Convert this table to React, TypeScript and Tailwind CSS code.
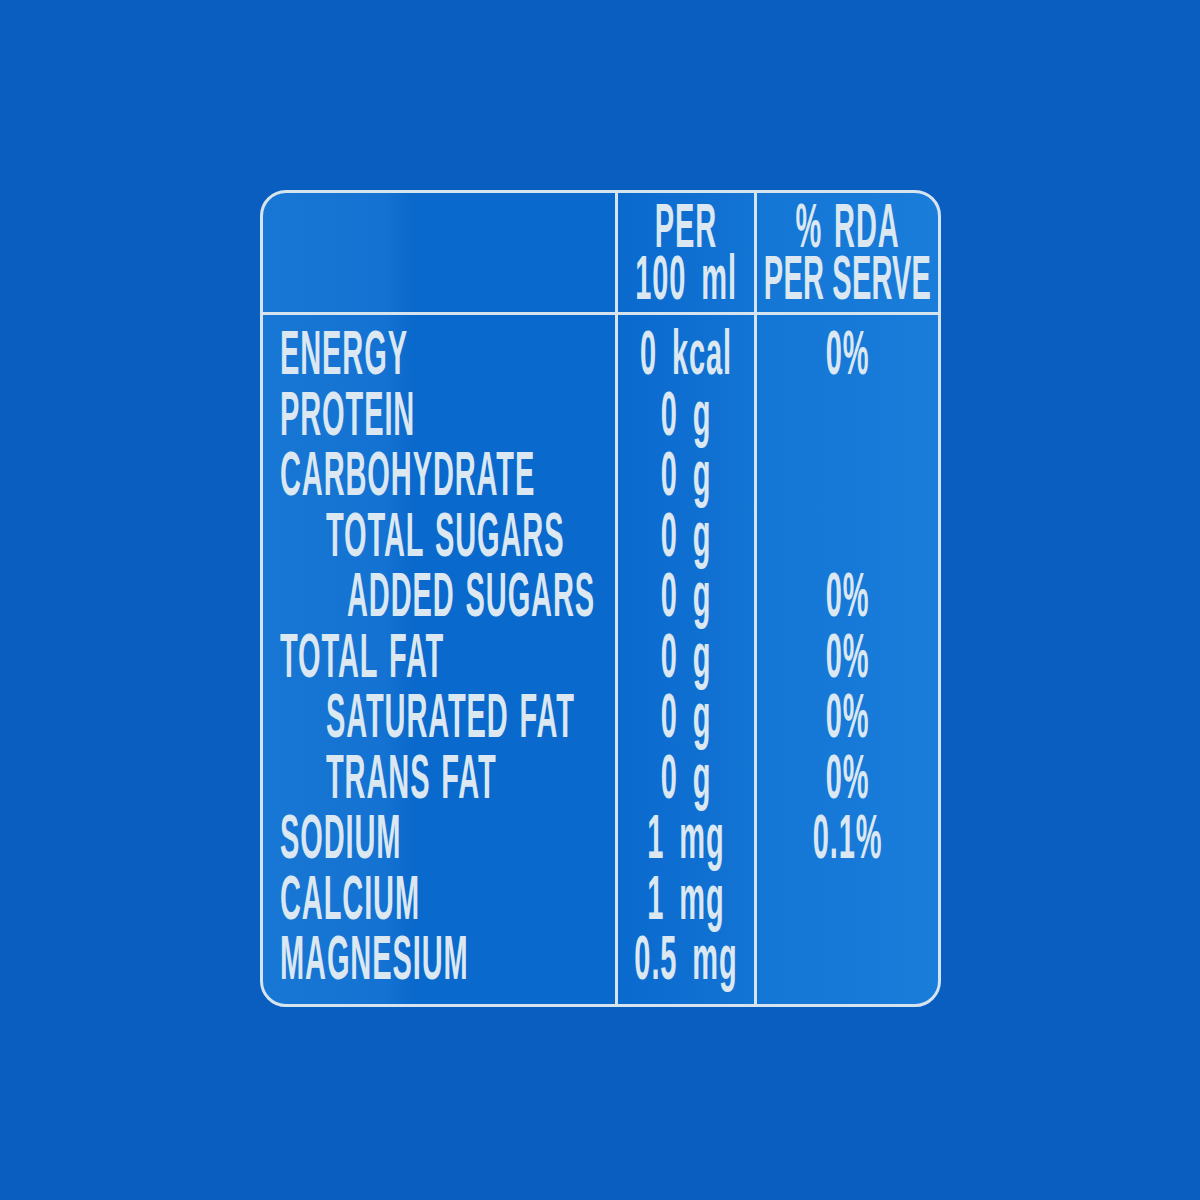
import React from "react";

type Row = { name: string; indent?: 0 | 1 | 2; per: string; rda?: string };

const rows: Row[] = [
  { name: "ENERGY", per: "0 kcal", rda: "0%" },
  { name: "PROTEIN", per: "0 g" },
  { name: "CARBOHYDRATE", per: "0 g" },
  { name: "TOTAL SUGARS", indent: 1, per: "0 g" },
  { name: "ADDED SUGARS", indent: 2, per: "0 g", rda: "0%" },
  { name: "TOTAL FAT", per: "0 g", rda: "0%" },
  { name: "SATURATED FAT", indent: 1, per: "0 g", rda: "0%" },
  { name: "TRANS FAT", indent: 1, per: "0 g", rda: "0%" },
  { name: "SODIUM", per: "1 mg", rda: "0.1%" },
  { name: "CALCIUM", per: "1 mg" },
  { name: "MAGNESIUM", per: "0.5 mg" },
];

const indentCls = ["pl-[17px]", "pl-[63px]", "pl-[84px]"];

// tall condensed lettering: small Arial stretched vertically
function Tall({ children, className = "" }: { children: React.ReactNode; className?: string }) {
  return (
    <span
      className={`inline-block whitespace-nowrap text-[29px] font-bold scale-y-[2.17] origin-center ${className}`}
    >
      {children}
    </span>
  );
}

export default function App() {
  return (
    <div
      className="w-[1200px] h-[1200px] bg-[#0a5ec0] pt-[190px] pl-[260px] text-[#dbe7f1]"
      style={{ fontFamily: '"Liberation Sans", Arial, sans-serif' }}
    >
      <div className="w-[681px] h-[817px] rounded-[26px] border-[3px] border-[#d6e4ef] overflow-hidden bg-[linear-gradient(90deg,#1877d4_0%,#1472d2_18%,#0a69cc_22%,#0a69cc_52%,#0d6dd0_60%,#1476d5_75%,#1b7dda_100%)] flex flex-col">
        {/* header */}
        <div className="grid grid-cols-[352px_139px_minmax(0,1fr)] h-[122px] border-b-[3px] border-[#d6e4ef]">
          <div />
          <div className="min-w-0 border-l-[3px] border-[#d6e4ef] flex flex-col items-center justify-center">
            <div className="h-[52px] flex items-center">
              <Tall className="leading-[23px] tracking-[0.9px]">PER</Tall>
            </div>
            <div className="h-[52px] flex items-center">
              <Tall className="leading-[23px] tracking-[0.9px] [word-spacing:6px]">100 ml</Tall>
            </div>
          </div>
          <div className="min-w-0 border-l-[3px] border-[#d6e4ef] flex flex-col items-center justify-center">
            <div className="h-[52px] flex items-center">
              <Tall className="leading-[23px] tracking-[0.9px] [word-spacing:3px]">% RDA</Tall>
            </div>
            <div className="h-[52px] flex items-center">
              <Tall className="leading-[23px] tracking-[0.2px]">PER SERVE</Tall>
            </div>
          </div>
        </div>

        {/* body */}
        <div className="grid grid-cols-[352px_139px_minmax(0,1fr)] flex-1">
          <div className="min-w-0 pt-[7px]">
            {rows.map((r) => (
              <div key={r.name} className={`h-[60.5px] flex items-center ${indentCls[r.indent ?? 0]}`}>
                <Tall className="leading-[26px] tracking-[0.9px] [word-spacing:2px]">{r.name}</Tall>
              </div>
            ))}
          </div>
          <div className="min-w-0 border-l-[3px] border-[#d6e4ef] pt-[7px]">
            {rows.map((r) => (
              <div key={r.name} className="h-[60.5px] flex items-center justify-center">
                <Tall className="leading-[26px] tracking-[0.9px] [word-spacing:6px]">{r.per}</Tall>
              </div>
            ))}
          </div>
          <div className="min-w-0 border-l-[3px] border-[#d6e4ef] pt-[7px]">
            {rows.map((r) => (
              <div key={r.name} className="h-[60.5px] flex items-center justify-center">
                {r.rda ? <Tall className="leading-[26px] tracking-[0.9px]">{r.rda}</Tall> : null}
              </div>
            ))}
          </div>
        </div>
      </div>
    </div>
  );
}
